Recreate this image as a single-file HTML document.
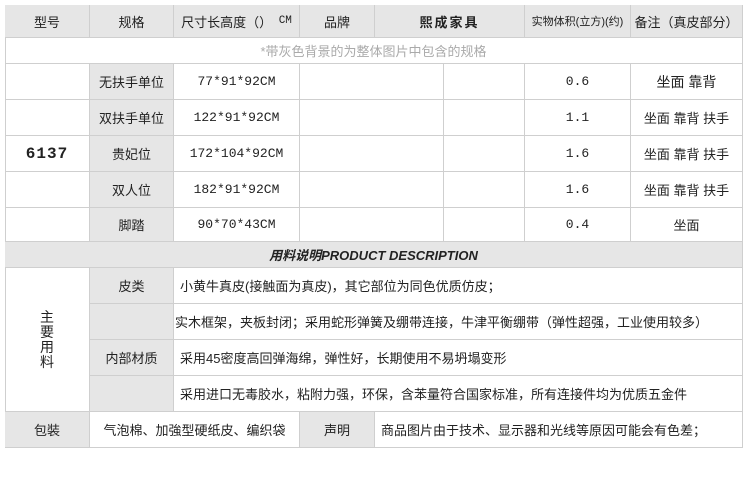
<!DOCTYPE html>
<html><head><meta charset="utf-8"><style>
body{margin:0;width:750px;height:500px;background:#fff;position:relative;overflow:hidden;font-family:"Liberation Sans","Noto Sans CJK SC",sans-serif;color:#222}
.c{position:absolute;box-sizing:border-box;border-right:1px solid #cfcfcf;border-bottom:1px solid #cfcfcf;display:flex;align-items:center;justify-content:center;font-size:13px;white-space:nowrap;overflow:hidden}
.g{background:#e6e6e6}
.m{font-family:"Liberation Mono","Noto Sans CJK SC",monospace;font-size:13px}
.l{justify-content:flex-start;padding-left:6px}
</style></head><body>
<div style="position:absolute;left:5px;top:5px;width:738px;height:443px;border-left:1px solid #cfcfcf;border-top:1px solid #cfcfcf;box-sizing:border-box"></div>
<div class="c g" style="left:5px;top:5px;width:85px;height:33px">型号</div>
<div class="c g" style="left:90px;top:5px;width:84px;height:33px">规格</div>
<div class="c g" style="left:174px;top:5px;width:126px;height:33px">尺寸长高度（）<span class="m" style="font-size:11px">&nbsp;CM</span></div>
<div class="c g" style="left:300px;top:5px;width:75px;height:33px">品牌</div>
<div class="c g" style="left:375px;top:5px;width:150px;height:33px;font-weight:bold;letter-spacing:2px">熙成家具</div>
<div class="c g" style="left:525px;top:5px;width:106px;height:33px;font-size:11px">实物体积(立方)(约)</div>
<div class="c g" style="left:631px;top:5px;width:112px;height:33px">备注（真皮部分）</div>
<div class="c" style="left:5px;top:38px;width:738px;height:26px;color:#aaa;font-size:13px">*带灰色背景的为整体图片中包含的规格</div>
<div class="c" style="left:5px;top:64px;width:85px;height:36px"></div>
<div class="c" style="left:5px;top:100px;width:85px;height:36px"></div>
<div class="c m" style="left:5px;top:136px;width:85px;height:36px;font-size:16px;font-weight:bold;letter-spacing:1px">6137</div>
<div class="c" style="left:5px;top:172px;width:85px;height:36px"></div>
<div class="c" style="left:5px;top:208px;width:85px;height:34px"></div>
<div class="c g" style="left:90px;top:64px;width:84px;height:36px">无扶手单位</div>
<div class="c g" style="left:90px;top:100px;width:84px;height:36px">双扶手单位</div>
<div class="c g" style="left:90px;top:136px;width:84px;height:36px">贵妃位</div>
<div class="c g" style="left:90px;top:172px;width:84px;height:36px">双人位</div>
<div class="c g" style="left:90px;top:208px;width:84px;height:34px">脚踏</div>
<div class="c m" style="left:174px;top:64px;width:126px;height:36px">77*91*92CM</div>
<div class="c m" style="left:174px;top:100px;width:126px;height:36px">122*91*92CM</div>
<div class="c m" style="left:174px;top:136px;width:126px;height:36px">172*104*92CM</div>
<div class="c m" style="left:174px;top:172px;width:126px;height:36px">182*91*92CM</div>
<div class="c m" style="left:174px;top:208px;width:126px;height:34px">90*70*43CM</div>
<div class="c" style="left:300px;top:64px;width:144px;height:36px"></div>
<div class="c" style="left:300px;top:100px;width:144px;height:36px"></div>
<div class="c" style="left:300px;top:136px;width:144px;height:36px"></div>
<div class="c" style="left:300px;top:172px;width:144px;height:36px"></div>
<div class="c" style="left:300px;top:208px;width:144px;height:34px"></div>
<div class="c" style="left:444px;top:64px;width:81px;height:36px"></div>
<div class="c" style="left:444px;top:100px;width:81px;height:36px"></div>
<div class="c" style="left:444px;top:136px;width:81px;height:36px"></div>
<div class="c" style="left:444px;top:172px;width:81px;height:36px"></div>
<div class="c" style="left:444px;top:208px;width:81px;height:34px"></div>
<div class="c m" style="left:525px;top:64px;width:106px;height:36px">0.6</div>
<div class="c m" style="left:525px;top:100px;width:106px;height:36px">1.1</div>
<div class="c m" style="left:525px;top:136px;width:106px;height:36px">1.6</div>
<div class="c m" style="left:525px;top:172px;width:106px;height:36px">1.6</div>
<div class="c m" style="left:525px;top:208px;width:106px;height:34px">0.4</div>
<div class="c" style="left:631px;top:64px;width:112px;height:36px;font-size:14px">坐面 靠背</div>
<div class="c" style="left:631px;top:100px;width:112px;height:36px">坐面 靠背 扶手</div>
<div class="c" style="left:631px;top:136px;width:112px;height:36px">坐面 靠背 扶手</div>
<div class="c" style="left:631px;top:172px;width:112px;height:36px">坐面 靠背 扶手</div>
<div class="c" style="left:631px;top:208px;width:112px;height:34px">坐面</div>
<div class="c g" style="left:5px;top:242px;width:738px;height:26px;font-weight:bold;font-style:italic;font-size:13px">用料说明PRODUCT DESCRIPTION</div>
<div class="c" style="left:5px;top:268px;width:85px;height:144px;white-space:normal;font-size:14px;line-height:15px;text-align:center;padding:0 35px">主要用料</div>
<div class="c g" style="left:90px;top:268px;width:84px;height:36px">皮类</div>
<div class="c g" style="left:90px;top:304px;width:84px;height:36px"></div>
<div class="c g" style="left:90px;top:340px;width:84px;height:36px">内部材质</div>
<div class="c g" style="left:90px;top:376px;width:84px;height:36px"></div>
<div class="c l" style="left:174px;top:268px;width:569px;height:36px">小黄牛真皮(接触面为真皮)，其它部位为同色优质仿皮；</div>
<div class="c l" style="left:174px;top:304px;width:569px;height:36px;padding-left:1px">实木框架，夹板封闭；采用蛇形弹簧及绷带连接，牛津平衡绷带（弹性超强，工业使用较多）</div>
<div class="c l" style="left:174px;top:340px;width:569px;height:36px">采用45密度高回弹海绵，弹性好，长期使用不易坍塌变形</div>
<div class="c l" style="left:174px;top:376px;width:569px;height:36px">采用进口无毒胶水，粘附力强，环保，含苯量符合国家标准，所有连接件均为优质五金件</div>
<div class="c g" style="left:5px;top:412px;width:85px;height:36px">包裝</div>
<div class="c" style="left:90px;top:412px;width:210px;height:36px">气泡棉、加強型硬纸皮、编织袋</div>
<div class="c g" style="left:300px;top:412px;width:75px;height:36px">声明</div>
<div class="c l" style="left:375px;top:412px;width:368px;height:36px">商品图片由于技术、显示器和光线等原因可能会有色差；</div>
</body></html>
